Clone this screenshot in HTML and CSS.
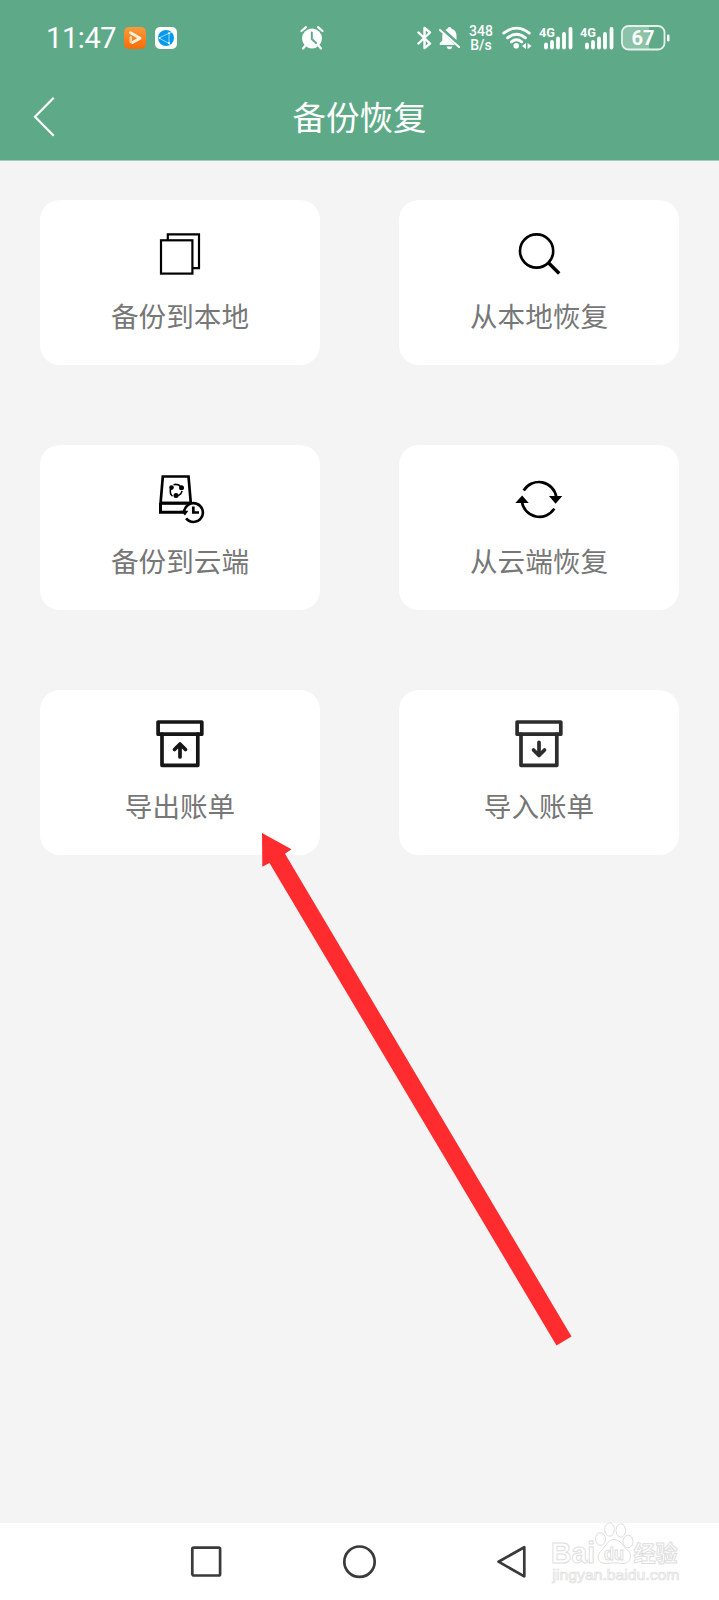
FILE: index.html
```html
<!DOCTYPE html>
<html lang="zh-CN">
<head>
<meta charset="utf-8">
<title>备份恢复</title>
<link rel="stylesheet" href="styles.css">
</head>
<body>
<div class="screen">
  <header class="header">
    <div class="status">
      <div class="status-left">
        <span class="time">11:47</span>
        <svg class="app-icon" width="22" height="22" viewBox="0 0 22 22">
          <defs><linearGradient id="orange" x1="0" y1="0" x2="0" y2="1"><stop offset="0" stop-color="#fa9a3c"/><stop offset="1" stop-color="#fa6c05"/></linearGradient></defs>
          <rect width="22" height="22" rx="5" fill="url(#orange)"/>
          <path d="M6.500 5.700 16 11.300 8.500 15.500" fill="none" stroke="#fff2dc" stroke-width="2.800" stroke-linecap="round" stroke-linejoin="round"/>
          <path d="M6.800 10.500V15" stroke="#ffd59b" stroke-width="2.600" stroke-linecap="round"/>
        </svg>
        <svg class="app-icon" width="22" height="22" viewBox="0 0 22 22">
          <rect width="22" height="22" rx="5" fill="#fff"/>
          <circle cx="11" cy="11" r="8" fill="#0799ed"/>
          <path d="M4 11 14 6.200V16.500ZM14 6.200l3-.7M14 16.500l1 1.500" fill="none" stroke="#bdeaff" stroke-width="0.800"/>
          <circle cx="4.500" cy="11" r="0.900" fill="#fff"/><circle cx="14" cy="6.300" r="1" fill="#fff"/><circle cx="14" cy="16" r="1" fill="#fff"/>
        </svg>
      </div>
      <svg class="alarm" width="24" height="24" viewBox="0 0 24 24">
        <circle cx="12" cy="12.500" r="10" fill="#fff"/>
        <path d="M1.500 5 6 1.200M22.500 5 18 1.200M5.500 19.500 3 22.500M18.500 19.500l2.500 3" stroke="#fff" stroke-width="2.200" stroke-linecap="round"/>
        <path d="M11.800 6.500V13L16 17" fill="none" stroke="#5eaa88" stroke-width="2" stroke-linecap="round"/>
      </svg>
      <div class="status-right">
        <svg width="15" height="24" viewBox="0 0 15 24">
          <path d="M1.500 6.500 13 17.500 7.500 22V2L13 6.500 1.500 17.500" fill="none" stroke="#fff" stroke-width="2.400" stroke-linejoin="round" stroke-linecap="round"/>
        </svg>
        <svg class="bell" width="21" height="24" viewBox="0 0 21 24">
          <path d="M10.500 1c1.100 0 1.900.7 2 1.700 3.300.8 5 3.600 5 7V14L6.500 3.900q1-.8 2-1.200C8.700 1.700 9.400 1 10.500 1ZM3.800 7.200 16 19H.8v-2L3.300 14.500V9.500Q3.300 8.200 3.800 7.200ZM7.500 20.500h6q-.8 2.700-3 2.700t-3-2.700Z" fill="#fff"/>
          <path d="M1 4 20 21" stroke="#fff" stroke-width="2" stroke-linecap="round"/>
        </svg>
        <div class="speed"><span>348</span><span>B/s</span></div>
        <svg class="wifi" width="30" height="24" viewBox="0 0 30 24">
          <g fill="none" stroke="#fff" stroke-width="2.800" stroke-linecap="round"><path d="M1.700 7.200Q14.500-2.900 27.300 7.200"/><path d="M5.600 11.800Q14.500 4.600 23.400 11.800"/><path d="M9.300 15.800Q14.500 11.800 19.700 15.800"/></g>
          <circle cx="14.200" cy="19.800" r="2.800" fill="#fff"/>
          <path d="M20 20l3.900-3v6ZM29.500 20l-3.900-3v6Z" fill="#fff"/>
        </svg>
        <svg class="signal" width="34" height="24" viewBox="0 0 34 24">
          <text class="net" x="0" y="11" textLength="16" lengthAdjust="spacingAndGlyphs">4G</text>
          <path d="M7 18.500V21.500M13 16v5.500M19 12.500v9M25 8v13.500M31.500 3v18.500" stroke="#fff" stroke-width="3.800" stroke-linecap="round"/>
        </svg>
        <svg class="signal" width="34" height="24" viewBox="0 0 34 24">
          <text class="net" x="0" y="11" textLength="16" lengthAdjust="spacingAndGlyphs">4G</text>
          <path d="M7 18.500V21.500M13 16v5.500M19 12.500v9M25 8v13.500M31.500 3v18.500" stroke="#fff" stroke-width="3.800" stroke-linecap="round"/>
        </svg>
        <svg class="battery" width="50" height="26" viewBox="0 0 50 26">
          <path d="M7 1.500h21v23H7q-5 0-5-5v-13q0-5 5-5Z" fill="#8bc2a8"/>
          <rect x="1" y="1" width="42.500" height="23.500" rx="6.500" fill="none" stroke="#e3f3eb" stroke-width="1.800"/>
          <rect x="46" y="9.500" width="2.500" height="7" rx="1.200" fill="#fff"/>
          <text class="level" x="10.500" y="20" textLength="23" lengthAdjust="spacingAndGlyphs">67</text>
        </svg>
      </div>
    </div>
    <div class="titlebar">
      <svg class="back" width="24" height="42" viewBox="0 0 24 42"><path d="M21.700 1.700 3 20.800 21.700 39.800" fill="none" stroke="#fff" stroke-width="2.200"/></svg>
      <h1 class="title">备份恢复</h1>
    </div>
  </header>

  <main class="cards">
    <div class="card">
      <svg width="52" height="52" viewBox="0 0 52 52" fill="none" stroke="#000" stroke-width="2.200">
        <path d="M13.800 12.300V6.300H45V40.200H38.500"/><rect x="7" y="12.300" width="31.400" height="33.300"/>
      </svg>
      <span class="label">备份到本地</span>
    </div>
    <div class="card">
      <svg width="52" height="52" viewBox="0 0 52 52" fill="none" stroke="#000">
        <circle cx="23.600" cy="23" r="16.600" stroke-width="2.600"/><path d="M35.200 34.600 46.200 45.400" stroke-width="3.500"/>
      </svg>
      <span class="label">从本地恢复</span>
    </div>
    <div class="card">
      <svg width="52" height="52" viewBox="0 0 52 52" fill="none" stroke="#000">
        <path d="M8.800 3.500H34.500L36.800 30H6.600Z" stroke-width="2.700"/>
        <path d="M6.500 30V39.300H29M6 30.300H38" stroke-width="3"/>
        <path d="M19.500 11.700Q24.500 10.500 27 14M16.500 16Q15.500 21 18.500 23.200M23 23Q27.500 21.500 28 18" stroke-width="1.600"/>
        <circle cx="17.500" cy="14.600" r="2.300" fill="#000" stroke="none"/><circle cx="27.500" cy="14.700" r="2.500" fill="#000" stroke="none"/><circle cx="22" cy="22.600" r="2.500" fill="#000" stroke="none"/>
        <circle cx="39.400" cy="39.300" r="10" fill="#fff" stroke="none"/>
        <path d="M30.100 38.800a9.400 9.400 0 1 1 2 6.600" stroke-width="2.600"/>
        <path d="M26.300 37.800H34.400L31 42.600Z" fill="#000" stroke="none"/>
        <path d="M39.300 33.500V39.500H45" stroke-width="2.700"/>
      </svg>
      <span class="label">备份到云端</span>
    </div>
    <div class="card">
      <svg width="52" height="52" viewBox="0 0 52 52" fill="none" stroke="#000" stroke-width="2.700">
        <path d="M10.700 17.500A17.700 17.700 0 0 1 43.300 24"/><path d="M41.300 35.600A17.700 17.700 0 0 1 8.900 29"/>
        <path d="M36 23H49.300L42.600 30.800ZM2.300 30 9.100 22.600 15.800 30Z" fill="#000" stroke="none"/>
      </svg>
      <span class="label">从云端恢复</span>
    </div>
    <div class="card">
      <svg width="52" height="52" viewBox="0 0 52 52" fill="none" stroke="#161616" stroke-width="3.700" stroke-linejoin="round" stroke-linecap="round">
        <rect x="4.100" y="4" width="43.700" height="12.200"/><path d="M8 16V47.300H43.800V16"/><path d="M26 39V26M20.500 31.500 26 26 31.500 31.500"/>
      </svg>
      <span class="label">导出账单</span>
    </div>
    <div class="card">
      <svg width="52" height="52" viewBox="0 0 52 52" fill="none" stroke="#2c2c2c" stroke-width="3.700" stroke-linejoin="round" stroke-linecap="round">
        <rect x="4.100" y="4" width="43.700" height="12.200"/><path d="M8 16V47.300H43.800V16"/><path d="M26 24.300V37.300M20.500 32 26 37.500 31.500 32"/>
      </svg>
      <span class="label">导入账单</span>
    </div>
  </main>

  <nav class="nav">
    <svg width="34" height="36" viewBox="0 0 34 36"><rect x="3.300" y="3.700" width="27.800" height="27.800" rx="1.500" class="nav-line"/></svg>
    <svg width="36" height="36" viewBox="0 0 36 36"><circle cx="17.500" cy="17.700" r="15.200" class="nav-line"/></svg>
    <svg width="32" height="36" viewBox="0 0 32 36"><path d="M28.300 3.200V32.300L2.500 17.700Z" class="nav-line"/></svg>
  </nav>

  <svg class="arrow" width="312" height="516" viewBox="0 0 312 516"><path d="M2 3 31.500 19.300 25 23.700 311.500 506.500 296.500 515.500 9.500 33 2.300 36.800Z" fill="#fe2c2f"/></svg>

  <svg class="watermark" width="134" height="66" viewBox="0 0 134 66">
    <g class="mark-outline">
      <text class="mark-main" x="0" y="41.500" textLength="44" lengthAdjust="spacingAndGlyphs">Bai</text>
      <ellipse cx="49.500" cy="18" rx="5" ry="6.300"/><ellipse cx="58.500" cy="8.500" rx="4.800" ry="6.700"/><ellipse cx="69.800" cy="9.500" rx="4.800" ry="6.700"/><ellipse cx="77" cy="20.500" rx="5" ry="6.300"/>
      <path d="M63 18.500C70 18.500 72 26 77 29.500 82 34 79 43 72 42.500Q63 41 55 42.500C47 43 45 35 49.500 30.500 55 26 56 18.500 63 18.500Z"/>
      <text class="mark-du" x="53" y="39" textLength="20" lengthAdjust="spacingAndGlyphs">du</text>
      <text class="mark-cn" x="82.500" y="39.500" textLength="44" lengthAdjust="spacingAndGlyphs">经验</text>
      <text class="mark-url" x="1.500" y="58.500" textLength="127" lengthAdjust="spacingAndGlyphs">jingyan.baidu.com</text>
    </g>
  </svg>
</div>
</body>
</html>
```
FILE: styles.css
```css
* { box-sizing: border-box; }
body {
  margin: 0;
  font-family: Roboto, "Noto Sans CJK SC", sans-serif;
}
svg { display: block; flex: none; }
.screen {
  position: relative;
  display: flex;
  flex-direction: column;
  width: 719px;
  height: 1600px;
  overflow: hidden;
  background: #f4f4f4;
}
.header {
  height: 161px;
  background: #5eaa88;
  border-bottom: 1px solid #a5ccb9;
  color: #fff;
}
.status {
  display: flex;
  align-items: center;
  height: 75px;
  padding-left: 46px;
}
.status-left {
  display: flex;
  align-items: center;
  gap: 9px;
  width: 254px;
}
.time {
  width: 69px;
  font-size: 29px;
  line-height: 34px;
  letter-spacing: -0.4px;
  white-space: nowrap;
}
.status-right {
  display: flex;
  align-items: center;
  margin-left: 93px;
}
.bell { margin-left: 7px; }
.speed {
  display: flex;
  flex-direction: column;
  align-items: center;
  width: 26px;
  margin-left: 8px;
  font-size: 14px;
  line-height: 14px;
  font-weight: 500;
}
.wifi { margin-left: 8px; }
.signal { margin-left: 7px; }
.battery { margin-left: 7px; }
.net { font-size: 13px; font-weight: 700; fill: #fff; }
.level { font-size: 21px; font-weight: 700; fill: #fff; }
.titlebar {
  display: grid;
  grid-template-columns: 100px 1fr 100px;
  align-items: center;
  height: 84px;
}
.back { margin-left: 32px; }
.title {
  margin: 0;
  padding-top: 3px;
  text-align: center;
  font-size: 33.500px;
  font-weight: 400;
  line-height: 48px;
}
.cards {
  display: grid;
  grid-template-columns: 280px 280px;
  grid-auto-rows: 165px;
  justify-content: space-between;
  align-content: start;
  gap: 80px 79px;
  flex: 1;
  padding: 39px 40px 40px;
}
.card {
  display: flex;
  flex-direction: column;
  align-items: center;
  padding-top: 28px;
  border-radius: 20px;
  background: #fff;
}
.label {
  margin-top: 17px;
  color: #777;
  font-size: 27.600px;
  line-height: 41px;
}
.nav {
  display: flex;
  justify-content: space-between;
  align-items: center;
  height: 77px;
  padding: 0 191px 0 189px;
  background: #fff;
}
.nav-line {
  fill: none;
  stroke: #3a3a3a;
  stroke-width: 2.700px;
  stroke-linejoin: round;
}
.arrow {
  position: absolute;
  left: 260px;
  top: 830px;
}
.watermark {
  position: absolute;
  left: 551px;
  top: 1521px;
}
.mark-outline {
  fill: #fff;
  stroke: #dedede;
  stroke-width: 1px;
}
.mark-main { font: 700 30px "Liberation Sans", sans-serif; }
.mark-du { font: 700 18px "Liberation Sans", sans-serif; }
.mark-cn { font: 700 22px "Noto Sans CJK SC", sans-serif; }
.mark-url { font: 15px "Liberation Sans", sans-serif; stroke-width: 0.700px; }
```
